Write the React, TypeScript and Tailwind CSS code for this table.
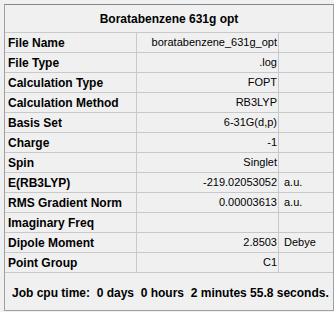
const rows: { label: string; value: string; unit?: string }[] = [
  { label: 'File Name', value: 'boratabenzene_631g_opt' },
  { label: 'File Type', value: '.log' },
  { label: 'Calculation Type', value: 'FOPT' },
  { label: 'Calculation Method', value: 'RB3LYP' },
  { label: 'Basis Set', value: '6-31G(d,p)' },
  { label: 'Charge', value: '-1' },
  { label: 'Spin', value: 'Singlet' },
  { label: 'E(RB3LYP)', value: '-219.02053052', unit: 'a.u.' },
  { label: 'RMS Gradient Norm', value: '0.00003613', unit: 'a.u.' },
  { label: 'Imaginary Freq', value: '' },
  { label: 'Dipole Moment', value: '2.8503', unit: 'Debye' },
  { label: 'Point Group', value: 'C1' },
]

export default function App() {
  return (
    <div
      className="w-[334px] h-[312px] bg-[#f0f0f0] pl-[4px] pt-[4px] text-black"
      style={{ fontFamily: '"Liberation Sans", Arial, sans-serif' }}
    >
      <div className="w-[330px] h-[307px] flex flex-col border border-[#a0a0a0] border-t-[#828790]">
        {/* summary title */}
        <div className="h-[28px] shrink-0 flex items-center justify-center border-b border-[#c8c8c8] text-[12px] font-bold">
          Boratabenzene 631g opt
        </div>

        {/* property rows */}
        {rows.map((row) => (
          <div
            key={row.label}
            className="h-[20px] shrink-0 grid grid-cols-[132px_142px_54px] border-b border-[#c8c8c8]"
          >
            <div className="flex items-center pl-[3px] border-r border-[#c8c8c8] text-[12px] font-bold whitespace-nowrap">
              {row.label}
            </div>
            <div className="flex items-center justify-end pr-[1px] border-r border-[#c8c8c8] text-[11px] whitespace-nowrap">
              {row.value}
            </div>
            <div className="flex items-center pl-[5px] text-[11px]">{row.unit}</div>
          </div>
        ))}

        {/* cpu time footer */}
        <div className="flex-1 flex items-center pl-[7px] pt-[2px] text-[12px] font-bold whitespace-pre">
          {'Job cpu time:  0 days  0 hours  2 minutes 55.8 seconds.'}
        </div>
      </div>
    </div>
  )
}
